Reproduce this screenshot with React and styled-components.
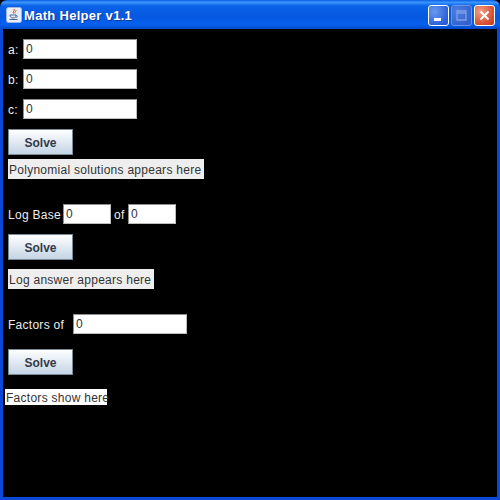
import React from 'react'
import styled, { createGlobalStyle } from 'styled-components'

const GlobalStyle = createGlobalStyle`
  html, body {
    margin: 0;
    padding: 0;
    background: #000;
  }
`

const Window = styled.div`
  width: 500px;
  height: 500px;
  display: flex;
  flex-direction: column;
  overflow: hidden;
  font-family: "Liberation Sans", Arial, sans-serif;
`

const TitleBar = styled.div`
  height: 29px;
  flex: none;
  box-sizing: border-box;
  display: flex;
  align-items: center;
  padding: 0 5px 0 6px;
  border-radius: 7px 7px 0 0;
  background: linear-gradient(180deg, #0a5fe0 0%, #3d95ff 8%, #0a63e8 20%, #0558e0 55%, #0660ee 85%, #0349c8 100%);
`

const TitleText = styled.span`
  margin-left: 2px;
  padding-top: 2px;
  flex: 1;
  color: #fff;
  font-size: 13px;
  font-weight: 700;
  letter-spacing: 0.3px;
  text-shadow: 1px 1px 0 #0a3a9c;
`

const Controls = styled.div`
  display: flex;
  gap: 2px;
  margin-top: 2px;
`

const ControlButton = styled.div`
  width: 21px;
  height: 21px;
  box-sizing: border-box;
  border: 1px solid #fff;
  border-radius: 3px;
  display: flex;
  align-items: center;
  justify-content: center;
  background: ${props => props.$close
    ? 'radial-gradient(circle at 30% 30%, #f0a088, #d9573a 60%, #c23a1c)'
    : props.$faded
      ? 'radial-gradient(circle at 30% 30%, #4f7fe0, #3563cf 70%, #2e5fd6)'
      : 'radial-gradient(circle at 30% 30%, #6a9af0, #2f62dc 70%, #2555d0)'};
  border-color: ${props => props.$faded ? '#6d93e8' : '#fff'};
`

const Body = styled.div`
  flex: 1;
  min-height: 0;
  background: #000;
  border-left: 3px solid #0a48d8;
  border-right: 3px solid #0a48d8;
  border-bottom: 3px solid #0a48d8;
  padding: 10px 0 0 5px;
  display: flex;
  flex-direction: column;
  align-items: flex-start;
`

const Row = styled.div`
  display: flex;
  align-items: center;
  height: 20px;
  margin-bottom: ${props => props.$after || 10}px;
  color: #eee;
  font-size: 12px;
`

const FieldLabel = styled.span`
  width: ${props => props.$width}px;
  flex: none;
  box-sizing: border-box;
  padding-left: ${props => props.$inset || 0}px;
  padding-top: 1px;
  letter-spacing: 0.27px;
  white-space: nowrap;
`

const Field = styled.input`
  width: ${props => props.$width}px;
  height: 20px;
  flex: none;
  box-sizing: border-box;
  padding: 0 0 0 2px;
  border: 1px solid #8e8e8e;
  border-right-color: #bdbdbd;
  border-bottom-color: #bdbdbd;
  outline: none;
  background: #fff;
  color: #333;
  font-family: "Liberation Sans", Arial, sans-serif;
  font-size: 12px;
`

const SolveButton = styled.button`
  width: 65px;
  height: 26px;
  flex: none;
  margin-bottom: ${props => props.$after}px;
  padding: 1px 0 0;
  border: 1px solid #7a8a99;
  background: linear-gradient(180deg, #ffffff 0%, #eaf0f6 35%, #c4d4e4 100%);
  color: #333a4a;
  font-family: "Liberation Sans", Arial, sans-serif;
  font-size: 12px;
  font-weight: 700;
`

const Output = styled.div`
  box-sizing: border-box;
  width: ${props => props.$width}px;
  height: ${props => props.$height || 20}px;
  margin-bottom: ${props => props.$after || 0}px;
  margin-left: ${props => props.$shift || 0}px;
  padding: 1px 0 0 1px;
  display: flex;
  align-items: center;
  background: ${props => props.$bg || '#eeeeee'};
  color: #333;
  font-size: 12px;
  letter-spacing: 0.27px;
  white-space: nowrap;
`

const JavaIcon = () => (
  <svg width="16" height="16" viewBox="0 0 16 16">
    <rect x="0.5" y="0.5" width="15" height="15" rx="2" fill="#e8eef8" stroke="#9ab6e6" />
    <path d="M8 2c1.500 1.500-2 2.500-.5 4.500M10 3c.8 1-2 2-1 3.500" fill="none" stroke="#d8502a" strokeWidth="1" />
    <path d="M4 8h6c0 2-1 3-3 3S4 10 4 8zM10 8.500c2 0 2 2-.5 2" fill="none" stroke="#4a6a9a" strokeWidth="1" />
    <path d="M3.500 12.500h8" stroke="#4a6a9a" strokeWidth="1" />
  </svg>
)

export default function App() {
  return (
    <Window>
      <GlobalStyle />
      <TitleBar>
        <JavaIcon />
        <TitleText>Math Helper v1.1</TitleText>
        <Controls>
          <ControlButton>
            <svg width="13" height="13" viewBox="0 0 13 13">
              <rect x="2" y="9" width="7" height="3" fill="#fff" />
            </svg>
          </ControlButton>
          <ControlButton $faded>
            <svg width="13" height="13" viewBox="0 0 13 13">
              <path d="M2 2h9v9H2zM2 4h9" fill="none" stroke="#7d9fe8" strokeWidth="1.300" />
            </svg>
          </ControlButton>
          <ControlButton $close>
            <svg width="13" height="13" viewBox="0 0 13 13">
              <path d="M2.500 2.500l8 8M10.500 2.500l-8 8" stroke="#fff" strokeWidth="2" />
            </svg>
          </ControlButton>
        </Controls>
      </TitleBar>
      <Body>
        <Row>
          <FieldLabel $width={15}>a:</FieldLabel>
          <Field $width={114} defaultValue="0" />
        </Row>
        <Row>
          <FieldLabel $width={15}>b:</FieldLabel>
          <Field $width={114} defaultValue="0" />
        </Row>
        <Row>
          <FieldLabel $width={15}>c:</FieldLabel>
          <Field $width={114} defaultValue="0" />
        </Row>
        <SolveButton $after={4}>Solve</SolveButton>
        <Output $width={196} $after={25}>Polynomial solutions appears here</Output>

        <Row>
          <FieldLabel $width={55}>Log Base</FieldLabel>
          <Field $width={48} defaultValue="0" />
          <FieldLabel $width={17} $inset={3}>of</FieldLabel>
          <Field $width={48} defaultValue="0" />
        </Row>
        <SolveButton $after={9}>Solve</SolveButton>
        <Output $width={146} $after={25}>Log answer appears here</Output>

        <Row $after={15}>
          <FieldLabel $width={65}>Factors of</FieldLabel>
          <Field $width={114} defaultValue="0" />
        </Row>
        <SolveButton $after={14}>Solve</SolveButton>
        <Output $width={102} $height={16} $bg="#ffffff" $shift={-3}>Factors show here</Output>
      </Body>
    </Window>
  )
}
